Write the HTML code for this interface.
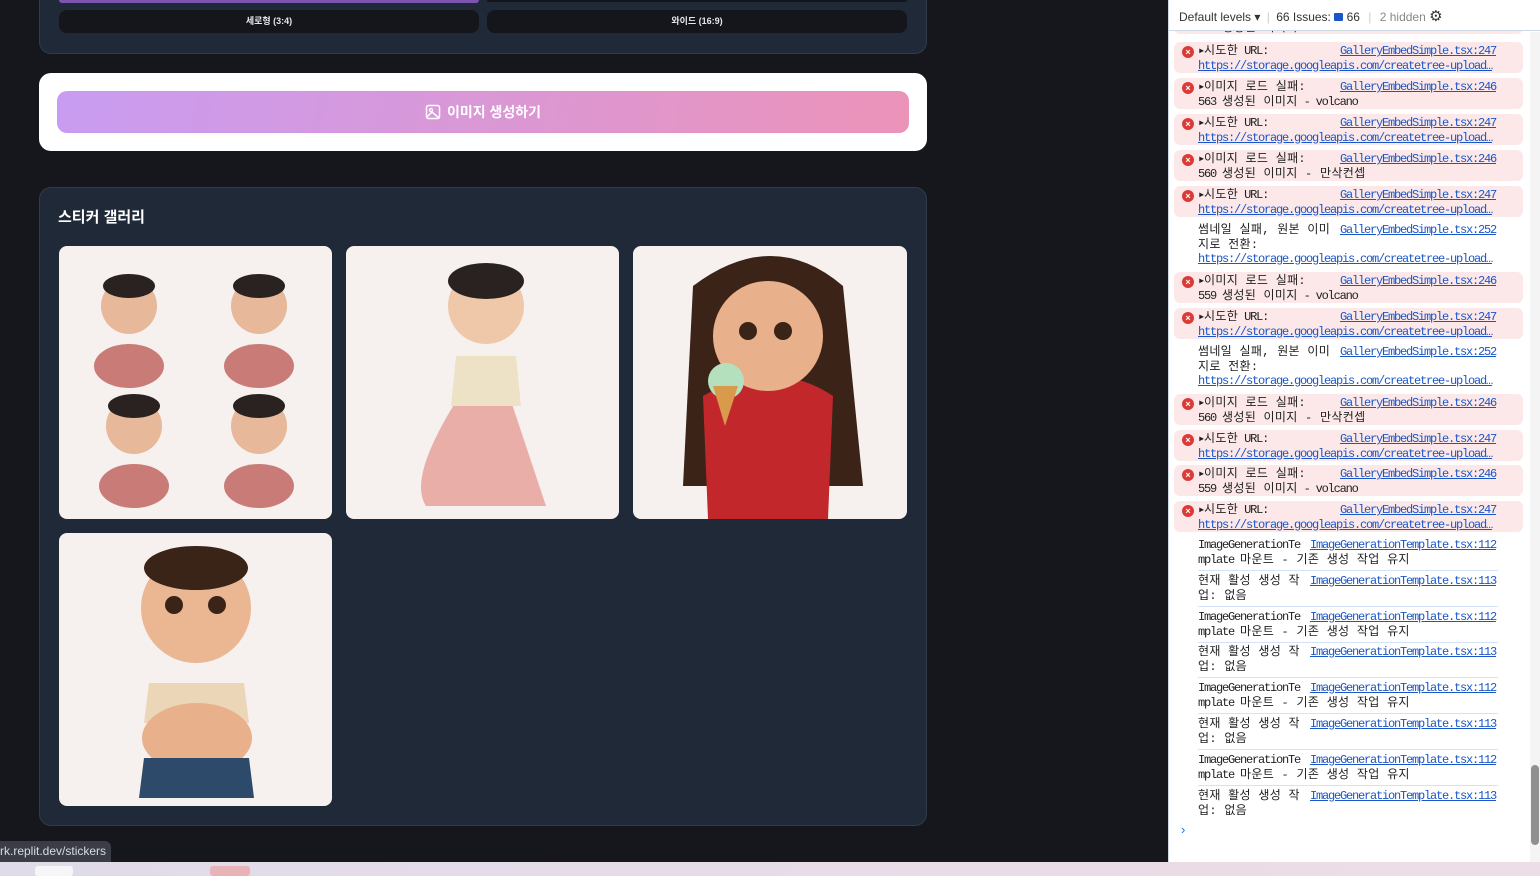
<!DOCTYPE html>
<html><head><meta charset="utf-8"><style>
*{box-sizing:border-box;margin:0;padding:0}
body{width:1540px;height:876px;overflow:hidden;background:#16171c;font-family:"Liberation Sans","Noto Sans CJK KR",sans-serif;position:relative}
.card{position:absolute;background:#1f2937;border:1px solid #313b4b;border-radius:12px}
.btn{position:absolute;background:#15161b;border-radius:8px;color:#e5e7eb;font-size:9px;font-weight:bold;text-align:center;line-height:23px}
.img{position:absolute;background:#f6f1ee;border-radius:8px;overflow:hidden}
.dev{position:absolute;left:1168px;top:0;width:372px;height:862px;background:#fff;border-left:1px solid #cfd8e6;overflow:hidden}
.row{position:absolute;left:5px;width:349px;border-radius:6px;font-family:"Liberation Mono","Noto Sans CJK KR",monospace;font-size:12px;letter-spacing:-1.2px;line-height:14.5px;color:#1f1f1f;padding:2px 0 0 24px;white-space:nowrap}
.row .k{letter-spacing:0.3px}
.err{background:#fce8e8}
.x{position:absolute;left:8px;top:4px;width:12px;height:12px;border-radius:50%;background:#dc3a36;color:#fff;font-size:9px;line-height:12px;text-align:center;font-family:"Liberation Sans",sans-serif;font-weight:bold;letter-spacing:0}
.lk{position:absolute;right:27px;top:2px;color:#1a56c8;text-decoration:underline;background:inherit}
.u{color:#1a56c8;text-decoration:underline;white-space:nowrap;overflow:hidden;text-overflow:ellipsis;display:block;width:298px}
.inf{border-bottom:1px solid #d4e3f7;border-radius:0}
.inf .lk{right:2px;background:#fff}
</style></head><body>
<div class="card" style="left:39px;top:-20px;width:888px;height:74px"></div>
<div style="position:absolute;left:59px;top:0;width:420px;height:3px;background:#7c55b0;border-radius:0 0 6px 6px"></div>
<div style="position:absolute;left:487px;top:0;width:420px;height:2px;background:#15161b"></div>
<div class="btn" style="left:59px;top:10px;width:420px">세로형 (3:4)</div>
<div class="btn" style="left:487px;top:10px;width:420px">와이드 (16:9)</div>

<div style="position:absolute;left:39px;top:73px;width:888px;height:78px;background:#fff;border-radius:12px"></div>
<div style="position:absolute;left:57px;top:91px;width:852px;height:42px;border-radius:10px;background:linear-gradient(100deg,#c89cf2,#ec93b9);color:#fff;font-weight:bold;font-size:14px;line-height:42px;text-align:center">
<svg width="16" height="16" viewBox="0 0 16 16" style="vertical-align:-3px;margin-right:6px"><rect x="1.5" y="1.5" width="13" height="13" rx="2" fill="none" stroke="#fff" stroke-width="1.5"/><circle cx="6" cy="6" r="1.5" fill="none" stroke="#fff" stroke-width="1.3"/><path d="M2 13l5-5 7 6" fill="none" stroke="#fff" stroke-width="1.5"/></svg>이미지 생성하기</div>

<div class="card" style="left:39px;top:187px;width:888px;height:639px"></div>
<div style="position:absolute;left:58px;top:206px;color:#fff;font-weight:bold;font-size:15px">스티커 갤러리</div>

<div class="img" style="left:59px;top:246px;width:273px;height:273px">
<svg width="273" height="273"><g fill="#e7b89a"><circle cx="70" cy="60" r="28"/><circle cx="200" cy="60" r="28"/><circle cx="75" cy="180" r="28"/><circle cx="200" cy="180" r="28"/></g><g fill="#c97c77"><ellipse cx="70" cy="120" rx="35" ry="22"/><ellipse cx="200" cy="120" rx="35" ry="22"/><ellipse cx="75" cy="240" rx="35" ry="22"/><ellipse cx="200" cy="240" rx="35" ry="22"/></g><g fill="#2a2220"><ellipse cx="70" cy="40" rx="26" ry="12"/><ellipse cx="200" cy="40" rx="26" ry="12"/><ellipse cx="75" cy="160" rx="26" ry="12"/><ellipse cx="200" cy="160" rx="26" ry="12"/></g></svg></div>
<div class="img" style="left:346px;top:246px;width:273px;height:273px">
<svg width="273" height="273"><path d="M120 140 Q60 230 80 260 L200 260 Q180 200 160 140Z" fill="#e9aea8"/><path d="M110 110 L170 110 L175 160 L105 160Z" fill="#ede2c6"/><circle cx="140" cy="60" r="38" fill="#efc8aa"/><ellipse cx="140" cy="35" rx="38" ry="18" fill="#2a2220"/></svg></div>
<div class="img" style="left:633px;top:246px;width:274px;height:273px">
<svg width="274" height="273"><path d="M60 40 Q140 -20 210 40 L230 240 L50 240Z" fill="#3b2318"/><path d="M70 150 Q140 110 200 150 L195 273 L75 273Z" fill="#c2272c"/><circle cx="135" cy="90" r="55" fill="#e9b08c"/><circle cx="115" cy="85" r="9" fill="#3a2418"/><circle cx="150" cy="85" r="9" fill="#3a2418"/><circle cx="93" cy="135" r="18" fill="#b5e0bd"/><path d="M80 140 L105 140 L92 180Z" fill="#d99a4c"/></svg></div>
<div class="img" style="left:59px;top:533px;width:273px;height:273px">
<svg width="273" height="273"><path d="M90 150 L185 150 L190 190 L85 190Z" fill="#ecd6b8"/><ellipse cx="138" cy="205" rx="55" ry="35" fill="#e9b08c"/><path d="M85 225 L190 225 L195 265 L80 265Z" fill="#2e4a6b"/><circle cx="137" cy="75" r="55" fill="#ebb692"/><ellipse cx="137" cy="35" rx="52" ry="22" fill="#3a2418"/><circle cx="115" cy="72" r="9" fill="#3a2418"/><circle cx="158" cy="72" r="9" fill="#3a2418"/></svg></div>

<div style="position:absolute;left:0;top:841px;width:111px;height:21px;background:#3a3d46;border-radius:0 6px 0 0;color:#d8dbe2;font-size:12px;line-height:21px;white-space:nowrap;overflow:hidden">rk.replit.dev/stickers</div>
<div style="position:absolute;left:0;top:862px;width:1540px;height:14px;background:linear-gradient(90deg,#e0dbe8,#eddde6)"></div>
<div style="position:absolute;left:35px;top:866px;width:38px;height:10px;background:#f6f6f8;border-radius:3px"></div>
<div style="position:absolute;left:210px;top:866px;width:40px;height:10px;background:#e8b4b8;border-radius:3px"></div>

<div class="dev">
<div style="position:absolute;left:361px;top:32px;width:11px;height:830px;background:#f4f4f4"></div>
<div style="position:absolute;left:362px;top:765px;width:8px;height:80px;background:#909090;border-radius:4px"></div>

<div class="row err" style="top:16px;height:18px;padding-top:5px">561 <span class="k">생성된 이미지</span> - volcano</div>
<div class="row err" style="top:42px;height:31px"><span class="x">×</span>▸<span class="k">시도한</span> URL:<span class="lk">GalleryEmbedSimple.tsx:247</span><span class="u">https://storage.googleapis.com/createtree-upload…</span></div>
<div class="row err" style="top:78px;height:31px"><span class="x">×</span>▸<span class="k">이미지 로드 실패:</span><span class="lk">GalleryEmbedSimple.tsx:246</span><br>563 <span class="k">생성된 이미지</span> - volcano</div>
<div class="row err" style="top:114px;height:31px"><span class="x">×</span>▸<span class="k">시도한</span> URL:<span class="lk">GalleryEmbedSimple.tsx:247</span><span class="u">https://storage.googleapis.com/createtree-upload…</span></div>
<div class="row err" style="top:150px;height:31px"><span class="x">×</span>▸<span class="k">이미지 로드 실패:</span><span class="lk">GalleryEmbedSimple.tsx:246</span><br>560 <span class="k">생성된 이미지 - 만삭컨셉</span></div>
<div class="row err" style="top:186px;height:31px"><span class="x">×</span>▸<span class="k">시도한</span> URL:<span class="lk">GalleryEmbedSimple.tsx:247</span><span class="u">https://storage.googleapis.com/createtree-upload…</span></div>
<div class="row" style="top:221px;height:46px;background:#fff"><span class="k">썸네일 실패, 원본 이미</span><span class="lk">GalleryEmbedSimple.tsx:252</span><br><span class="k">지로 전환:</span><span class="u">https://storage.googleapis.com/createtree-upload…</span></div>
<div class="row err" style="top:272px;height:31px"><span class="x">×</span>▸<span class="k">이미지 로드 실패:</span><span class="lk">GalleryEmbedSimple.tsx:246</span><br>559 <span class="k">생성된 이미지</span> - volcano</div>
<div class="row err" style="top:308px;height:31px"><span class="x">×</span>▸<span class="k">시도한</span> URL:<span class="lk">GalleryEmbedSimple.tsx:247</span><span class="u">https://storage.googleapis.com/createtree-upload…</span></div>
<div class="row" style="top:343px;height:46px;background:#fff"><span class="k">썸네일 실패, 원본 이미</span><span class="lk">GalleryEmbedSimple.tsx:252</span><br><span class="k">지로 전환:</span><span class="u">https://storage.googleapis.com/createtree-upload…</span></div>
<div class="row err" style="top:394px;height:31px"><span class="x">×</span>▸<span class="k">이미지 로드 실패:</span><span class="lk">GalleryEmbedSimple.tsx:246</span><br>560 <span class="k">생성된 이미지 - 만삭컨셉</span></div>
<div class="row err" style="top:430px;height:31px"><span class="x">×</span>▸<span class="k">시도한</span> URL:<span class="lk">GalleryEmbedSimple.tsx:247</span><span class="u">https://storage.googleapis.com/createtree-upload…</span></div>
<div class="row err" style="top:465px;height:31px"><span class="x">×</span>▸<span class="k">이미지 로드 실패:</span><span class="lk">GalleryEmbedSimple.tsx:246</span><br>559 <span class="k">생성된 이미지</span> - volcano</div>
<div class="row err" style="top:501px;height:31px"><span class="x">×</span>▸<span class="k">시도한</span> URL:<span class="lk">GalleryEmbedSimple.tsx:247</span><span class="u">https://storage.googleapis.com/createtree-upload…</span></div>

<div class="row inf" style="top:536px;height:35px;left:29px;width:300px;padding-left:0">ImageGenerationTe<span class="lk">ImageGenerationTemplate.tsx:112</span><br>mplate <span class="k">마운트 - 기존 생성 작업 유지</span></div>
<div class="row inf" style="top:572px;height:35px;left:29px;width:300px;padding-left:0"><span class="k">현재 활성 생성 작</span><span class="lk">ImageGenerationTemplate.tsx:113</span><br><span class="k">업: 없음</span></div>
<div class="row inf" style="top:608px;height:35px;left:29px;width:300px;padding-left:0">ImageGenerationTe<span class="lk">ImageGenerationTemplate.tsx:112</span><br>mplate <span class="k">마운트 - 기존 생성 작업 유지</span></div>
<div class="row inf" style="top:643px;height:35px;left:29px;width:300px;padding-left:0"><span class="k">현재 활성 생성 작</span><span class="lk">ImageGenerationTemplate.tsx:113</span><br><span class="k">업: 없음</span></div>
<div class="row inf" style="top:679px;height:35px;left:29px;width:300px;padding-left:0">ImageGenerationTe<span class="lk">ImageGenerationTemplate.tsx:112</span><br>mplate <span class="k">마운트 - 기존 생성 작업 유지</span></div>
<div class="row inf" style="top:715px;height:35px;left:29px;width:300px;padding-left:0"><span class="k">현재 활성 생성 작</span><span class="lk">ImageGenerationTemplate.tsx:113</span><br><span class="k">업: 없음</span></div>
<div class="row inf" style="top:751px;height:35px;left:29px;width:300px;padding-left:0">ImageGenerationTe<span class="lk">ImageGenerationTemplate.tsx:112</span><br>mplate <span class="k">마운트 - 기존 생성 작업 유지</span></div>
<div class="row inf" style="top:787px;height:35px;left:29px;width:300px;padding-left:0;border-bottom:none"><span class="k">현재 활성 생성 작</span><span class="lk">ImageGenerationTemplate.tsx:113</span><br><span class="k">업: 없음</span></div>
<div style="position:absolute;left:12px;top:822px;color:#1a73e8;font-size:13px">›</div>

<div style="position:absolute;left:0;top:0;width:372px;height:31px;background:#fff;border-bottom:1px solid #cfd8e6;font-size:12px;color:#333;line-height:34px;padding-left:10px;white-space:nowrap">Default levels ▾ <span style="color:#ccc;margin:0 3px">|</span> 66 Issues: <span style="display:inline-block;width:9px;height:8px;background:#1a56c8;border-radius:1px"></span> 66 <span style="color:#ccc;margin:0 5px">|</span> <span style="color:#888">2 hidden</span> <span style="font-size:15px">⚙</span></div>
</div>
</body></html>
